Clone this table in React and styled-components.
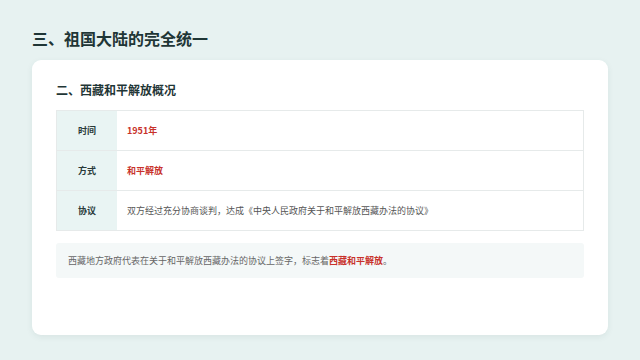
import styled, { createGlobalStyle } from "styled-components";

const Global = createGlobalStyle`
  html, body {
    margin: 0;
    padding: 0;
    background: #e7f2f1;
    font-family: "Noto Sans CJK SC", "Noto Sans", sans-serif;
  }
`;

const Page = styled.div`
  width: 640px;
  height: 360px;
  box-sizing: border-box;
  padding: 28px 32px 0 32px;
  display: flex;
  flex-direction: column;
`;

const Title = styled.h1`
  margin: 0;
  font-size: 16px;
  line-height: 20px;
  font-weight: 700;
  color: #1f3636;
`;

const Card = styled.div`
  margin-top: 12px;
  height: 275px;
  box-sizing: border-box;
  background: #fff;
  border-radius: 9px;
  box-shadow: 0 2px 6px rgba(40, 80, 80, 0.08);
  padding: 22px 24px 0 24px;
`;

const SubTitle = styled.h2`
  margin: 0 0 12px 0;
  font-size: 12px;
  line-height: 16px;
  font-weight: 700;
  color: #1f3636;
`;

const Table = styled.div`
  border: 1px solid #e6eaea;
  border-bottom: none;
`;

const Row = styled.div`
  display: flex;
  height: 40px;
  border-bottom: 1px solid #e6eaea;
  box-sizing: border-box;
`;

const Label = styled.div`
  width: 60px;
  flex-shrink: 0;
  background: #e9f4f3;
  display: flex;
  align-items: center;
  justify-content: center;
  font-size: 9px;
  font-weight: 700;
  color: #2a3a3a;
`;

const Value = styled.div`
  flex: 1;
  display: flex;
  align-items: center;
  padding-left: 10px;
  font-size: 9px;
  font-weight: ${(p) => (p.$hl ? 700 : 400)};
  color: ${(p) => (p.$hl ? "#c8322b" : "#555")};
`;

const Note = styled.div`
  margin-top: 12px;
  height: 35px;
  background: #f4f8f8;
  border-radius: 3px;
  display: flex;
  align-items: center;
  padding-left: 12px;
  font-size: 9px;
  color: #666;
`;

const Mark = styled.span`
  color: #c8322b;
  font-weight: 700;
`;

const rows = [
  { label: "时间", value: "1951年", hl: true },
  { label: "方式", value: "和平解放", hl: true },
  {
    label: "协议",
    value: "双方经过充分协商谈判，达成《中央人民政府关于和平解放西藏办法的协议》",
    hl: false,
  },
];

export default function App() {
  return (
    <>
      <Global />
      <Page>
        <Title>三、祖国大陆的完全统一</Title>
        <Card>
          <SubTitle>二、西藏和平解放概况</SubTitle>
          <Table>
            {rows.map((r) => (
              <Row key={r.label}>
                <Label>{r.label}</Label>
                <Value $hl={r.hl}>{r.value}</Value>
              </Row>
            ))}
          </Table>
          <Note>
            西藏地方政府代表在关于和平解放西藏办法的协议上签字，标志着
            <Mark>西藏和平解放</Mark>。
          </Note>
        </Card>
      </Page>
    </>
  );
}
